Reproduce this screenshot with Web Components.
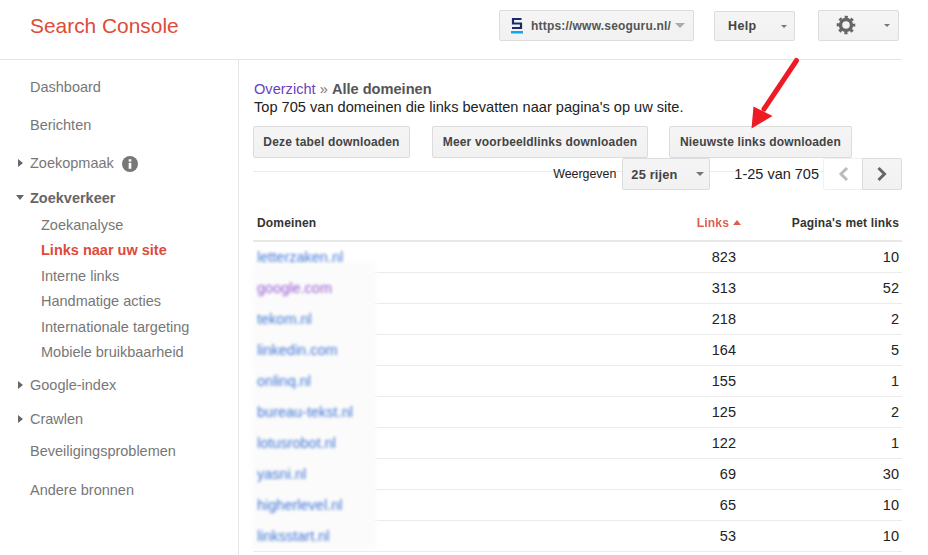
<!DOCTYPE html>
<html lang="nl">
<head>
<meta charset="utf-8">
<title>Search Console</title>
<style>
  html, body { margin: 0; background: #fff; }
  body { font: 14.5px "Liberation Sans", Arial, sans-serif; color: #222; overflow: hidden; height: 555px; }
</style>
</head>
<body>
<sc-app>
  <sc-header slot="header"></sc-header>
  <sc-nav slot="nav">
    <sc-nav-item gap="14">Dashboard</sc-nav-item>
    <sc-nav-item gap="13">Berichten</sc-nav-item>
    <sc-nav-item gap="13" arrow="right" info>Zoekopmaak</sc-nav-item>
    <sc-nav-item gap="9" arrow="down" strong>Zoekverkeer</sc-nav-item>
    <sc-nav-item gap="1.8" sub>Zoekanalyse</sc-nav-item>
    <sc-nav-item sub active>Links naar uw site</sc-nav-item>
    <sc-nav-item sub>Interne links</sc-nav-item>
    <sc-nav-item sub>Handmatige acties</sc-nav-item>
    <sc-nav-item sub>Internationale targeting</sc-nav-item>
    <sc-nav-item sub>Mobiele bruikbaarheid</sc-nav-item>
    <sc-nav-item gap="7.2" arrow="right">Google-index</sc-nav-item>
    <sc-nav-item gap="9" arrow="right">Crawlen</sc-nav-item>
    <sc-nav-item gap="7">Beveiligingsproblemen</sc-nav-item>
    <sc-nav-item gap="13">Andere bronnen</sc-nav-item>
  </sc-nav>
  <sc-links-page slot="main"></sc-links-page>
</sc-app>

<script>
const caret = (color, w = 4, h = 4) => `<i class="caret" style="display:block;flex:none;width:0;height:0;border-style:solid;border-color:${color} transparent transparent;border-width:${h}px ${w}px 0"></i>`;

customElements.define('sc-app', class extends HTMLElement {
  constructor() {
    super();
    this.attachShadow({ mode: 'open' }).innerHTML = `<style>
  :host { display: block; position: relative; width: 902px; height: 555px; }
  .body { display: flex; height: 495px; }
  .arrow { position: absolute; left: 745px; top: 55px; }
</style>
<slot name="header"></slot>
<div class="body">
  <slot name="nav"></slot>
  <slot name="main"></slot>
</div>
<svg class="arrow" width="60" height="80" viewBox="745 55 60 80">
  <path d="M796.5 60.5 L764 109" fill="none" stroke="#ed1c24" stroke-width="5" stroke-linecap="round"/>
  <path d="M751.5 128.5 L753.5 106.5 L772.5 116 Z" fill="#ed1c24"/>
</svg>`;
  }
});

customElements.define('sc-button', class extends HTMLElement {
  constructor() {
    super();
    this.attachShadow({ mode: 'open' }).innerHTML = `<style>
  :host {
    display: inline-flex;
    box-sizing: border-box;
    align-items: center;
    justify-content: center;
    height: 32px;
    border: 1px solid #dcdcdc;
    border-radius: 2px;
    background: linear-gradient(#f5f5f5, #f1f1f1);
    color: #444;
    font: bold 12px "Liberation Sans", Arial, sans-serif;
    letter-spacing: .17px;
    white-space: nowrap;
  }
</style><slot></slot>`;
  }
});

customElements.define('sc-header', class extends HTMLElement {
  constructor() {
    super();
    this.attachShadow({ mode: 'open' }).innerHTML = `<style>
  :host {
    display: flex;
    box-sizing: border-box;
    align-items: center;
    height: 60px;
    padding: 0 3px 8px 30px;
    border-bottom: 1px solid #e5e5e5;
  }
  .title { flex: 1; color: #dd4b39; font-size: 20.9px; }
  sc-button { height: 31px; }
  .site { width: 195px; justify-content: flex-start; padding-left: 11px; letter-spacing: .2px; color: #555; }
  .site svg { flex: none; margin-right: 8px; }
  .site .caret { margin-left: 4px; }
  .help { width: 81px; height: 30px; margin: 1px 0 0 20px; justify-content: flex-start; padding-left: 13px; font-size: 12.5px; letter-spacing: .38px; }
  .help .caret { margin-left: 24px; }
  .gear { width: 81px; margin-left: 23px; justify-content: flex-start; padding-left: 17px; }
  .gear svg { flex: none; margin-bottom: 2px; }
  .gear .caret { margin-left: 28px; }
</style>
<div class="title">Search Console</div>
<sc-button class="site">
  <svg width="12" height="17" viewBox="0 0 12 17">
    <path d="M10.5 2H2v4.5h8V11H1" fill="none" stroke="#1b2a6b" stroke-width="2.2"/>
    <rect y="14" width="12" height="2.5" fill="#0fa5f0"/>
  </svg>
  https://www.seoguru.nl/${caret('#aaa', 5, 5)}
</sc-button>
<sc-button class="help">Help${caret('#777', 3.5, 3.5)}</sc-button>
<sc-button class="gear">
  <svg width="20" height="20" viewBox="0 0 20 20" fill="none" stroke="#666">
    <circle cx="10" cy="10" r="5.5" stroke-width="3.4"/>
    <circle cx="10" cy="10" r="8" stroke-width="2.6" stroke-dasharray="3.14 3.14" stroke-dashoffset="1.57"/>
  </svg>
  ${caret('#777', 3.5, 3.5)}
</sc-button>`;
  }
});

customElements.define('sc-nav', class extends HTMLElement {
  constructor() {
    super();
    this.attachShadow({ mode: 'open' }).innerHTML = `<style>
  :host {
    display: flex;
    flex-direction: column;
    flex: none;
    box-sizing: border-box;
    width: 239px;
    border-right: 1px solid #e5e5e5;
  }
</style><slot></slot>`;
  }
});

customElements.define('sc-nav-item', class extends HTMLElement {
  connectedCallback() {
    const arrow = this.getAttribute('arrow');
    const shape = arrow === 'right'
      ? 'border-left:5px solid #666;border-top:4px solid transparent;border-bottom:4px solid transparent;left:18px'
      : 'border-top:5px solid #666;border-left:4px solid transparent;border-right:4px solid transparent;left:16px';
    this.attachShadow({ mode: 'open' }).innerHTML = `<style>
  :host {
    display: flex;
    position: relative;
    align-items: center;
    height: 25.4px;
    margin-top: ${this.getAttribute('gap') || 0}px;
    padding-left: ${this.hasAttribute('sub') ? 41 : 30}px;
    color: #777;
    font-size: 14.5px;
    white-space: nowrap;
  }
  :host([strong]) { color: #666; font-weight: bold; }
  :host([active]) { color: #dd4b39; font-weight: bold; }
  .arrow { position: absolute; width: 0; height: 0; ${shape} }
  svg { margin: 1px 0 0 8px; }
</style>
${arrow ? '<span class="arrow"></span>' : ''}<slot></slot>
${this.hasAttribute('info') ? `<svg width="16" height="16" viewBox="0 0 16 16"><circle cx="8" cy="8" r="8" fill="#777"/><rect x="6.7" y="6.8" width="2.6" height="6" fill="#fff"/><rect x="6.7" y="3.2" width="2.6" height="2.4" fill="#fff"/></svg>` : ''}`;
  }
});

customElements.define('sc-pager', class extends HTMLElement {
  constructor() {
    super();
    this.attachShadow({ mode: 'open' }).innerHTML = `<style>
  :host {
    display: flex;
    align-items: center;
    justify-content: flex-end;
    height: 32px;
    background: linear-gradient(#ebebeb, #ebebeb) 0 13px / 100% 1px no-repeat;
    font-size: 12.4px;
  }
  .label { margin-right: 6px; }
  .rows { width: 88px; justify-content: flex-start; padding-left: 8px; font-size: 12.8px; }
  .rows .caret { margin-left: 18px; }
  .range { margin: 0 4px 0 24px; font-size: 14.5px; background: #fff; }
  .nav { width: 40px; }
  .prev { background: #fff; border-color: #f0f0f0; border-radius: 2px 0 0 2px; }
  .next { margin-left: -1px; border-radius: 0 2px 2px 0; }
</style>
<span class="label">Weergeven</span>
<sc-button class="rows">25 rijen${caret('#777')}</sc-button>
<span class="range">1-25 van 705</span>
<sc-button class="nav prev"><svg width="12" height="16" viewBox="0 0 12 16"><path d="M10 2 4 8l6 6" fill="none" stroke="#bbb" stroke-width="3"/></svg></sc-button>
<sc-button class="nav next"><svg width="12" height="16" viewBox="0 0 12 16"><path d="M2.5 2l6 6-6 6" fill="none" stroke="#666" stroke-width="3"/></svg></sc-button>`;
  }
});

customElements.define('sc-row', class extends HTMLElement {
  connectedCallback() {
    const domain = this.getAttribute('domain');
    this.attachShadow({ mode: 'open' }).innerHTML = `<style>
  :host {
    display: grid;
    grid-template-columns: 1fr 130px 163px;
    box-sizing: border-box;
    align-items: center;
    height: 31px;
    border-bottom: 1px solid #ebebeb;
    font-size: 14.5px;
    color: #222;
  }
  .domain {
    position: relative;
    z-index: 1;
    justify-self: start;
    margin-left: 4px;
    color: ${this.hasAttribute('visited') ? '#7b2fc9' : '#1155cc'};
    opacity: .8;
    filter: blur(1.8px);
  }
  .num { text-align: right; padding-right: 3px; }
</style>
<span class="domain">${domain}</span>
<span class="num">${this.getAttribute('links')}</span>
<span class="num">${this.getAttribute('pages')}</span>`;
  }
});

customElements.define('sc-table', class extends HTMLElement {
  constructor() {
    super();
    this.attachShadow({ mode: 'open' }).innerHTML = `<style>
  :host { display: block; position: relative; margin-top: 15px; }
  .head {
    display: grid;
    grid-template-columns: 1fr 130px 163px;
    box-sizing: border-box;
    align-items: center;
    height: 37px;
    border-bottom: 2px solid #e8e8e8;
    font: bold 12px "Liberation Sans", Arial, sans-serif;
    letter-spacing: .17px;
    color: #333;
  }
  .head span { padding-left: 4px; }
  .sort {
    display: flex;
    align-items: center;
    justify-content: flex-end;
    gap: 4px;
    color: #dd4b39;
    margin-right: -2px;
    opacity: .9;
  }
  .sort i { width: 0; height: 0; border: 4.5px solid transparent; border-bottom: 5px solid #dd4b39; border-top: 0; }
  .head .pages { padding-right: 3px; text-align: right; }
  .patch {
    position: absolute;
    left: 0;
    top: 57px;
    width: 123px;
    height: 287px;
    background: #fbfbfb;
    filter: blur(2px);
  }
</style>
<div class="head"><span>Domeinen</span><div class="sort">Links<i></i></div><div class="pages">Pagina's met links</div></div>
<div class="patch"></div>
<slot></slot>`;
  }
});

customElements.define('sc-links-page', class extends HTMLElement {
  constructor() {
    super();
    const rows = [
      ['letterzaken.nl', 823, 10], ['google.com', 313, 52, 1], ['tekom.nl', 218, 2], ['linkedin.com', 164, 5],
      ['onlinq.nl', 155, 1], ['bureau-tekst.nl', 125, 2], ['lotusrobot.nl', 122, 1], ['yasni.nl', 69, 30],
      ['higherlevel.nl', 65, 10], ['linksstart.nl', 53, 10]
    ].map(r => `<sc-row domain="${r[0]}" links="${r[1]}" pages="${r[2]}"${r[3] ? ' visited' : ''}></sc-row>`).join('');
    this.attachShadow({ mode: 'open' }).innerHTML = `<style>
  :host { display: block; flex: 1; min-width: 0; padding: 20px 0 0 14px; font-size: 14.6px; }
  .crumb { line-height: 18px; color: #777; padding-left: 1px; }
  .crumb a { color: #6a3fc4; }
  .crumb b { color: #555; }
  .desc { line-height: 18px; color: #222; padding-left: 1px; }
  .buttons { display: flex; margin-top: 10px; }
  .buttons sc-button:nth-child(1) { width: 157px; }
  .buttons sc-button:nth-child(2) { width: 216px; margin-left: 22px; }
  .buttons sc-button:nth-child(3) { width: 183px; margin-left: 21px; }
</style>
<div class="crumb"><a>Overzicht</a> » <b>Alle domeinen</b></div>
<div class="desc">Top 705 van domeinen die links bevatten naar pagina's op uw site.</div>
<div class="buttons">
  <sc-button>Deze tabel downloaden</sc-button>
  <sc-button>Meer voorbeeldlinks downloaden</sc-button>
  <sc-button>Nieuwste links downloaden</sc-button>
</div>
<sc-pager></sc-pager>
<sc-table>${rows}</sc-table>`;
  }
});
</script>
</body>
</html>
